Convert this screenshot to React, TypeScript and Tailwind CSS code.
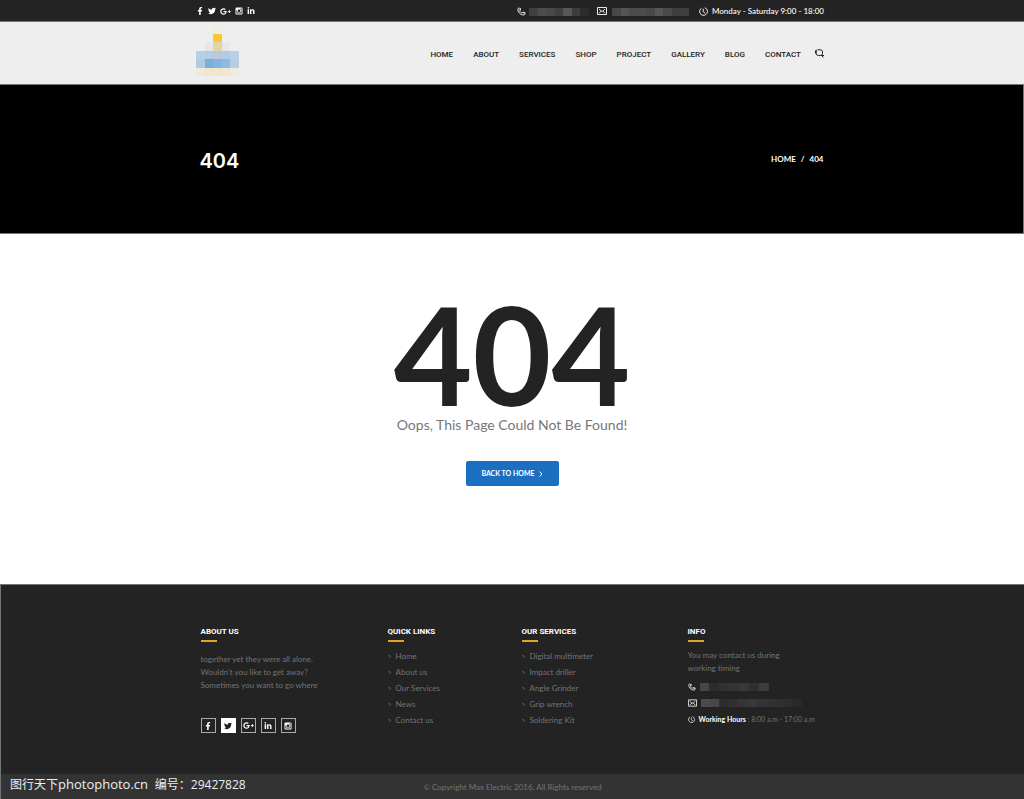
import type { ReactNode } from "react";
import { FaFacebookF, FaGooglePlusG, FaLinkedinIn, FaTwitter } from "react-icons/fa";

interface IconProps {
  className?: string;
}

const navItems = ["Home", "About", "Services", "Shop", "Project", "Gallery", "Blog", "Contact"];

const quickLinks = ["Home", "About us", "Our Services", "News", "Contact us"];

const services = ["Digital multimeter", "Impact driller", "Angle Grinder", "Grip wrench", "Soldering Kit"];

// x, y, fill of every tile of the logo
const logoTiles: [number, number, string][] = [
  [2, 0, "#f0ece2"],
  [2, 1, "#fcc62f"],
  [1, 2, "#e6e7e8"],
  [2, 2, "#e2d3a8"],
  [3, 2, "#e5e7e8"],
  [0, 3, "#b9cfe5"],
  [1, 3, "#b4cce4"],
  [2, 3, "#b9c9d6"],
  [3, 3, "#b1cbe4"],
  [4, 3, "#bbd0e5"],
  [0, 4, "#aecae5"],
  [1, 4, "#78aedd"],
  [2, 4, "#85b4dc"],
  [3, 4, "#90badf"],
  [4, 4, "#b5cee5"],
  [0, 5, "#f0e9dc"],
  [1, 5, "#f2e6cc"],
  [2, 5, "#f1e5cb"],
  [3, 5, "#f1e6cf"],
  [4, 5, "#efeadf"],
];

function InstagramIcon({ className }: IconProps) {
  return (
    <svg viewBox="0 0 16 16" className={className} fill="currentColor" aria-hidden="true">
      <path
        fillRule="evenodd"
        d="M3 1h10a2 2 0 0 1 2 2v10a2 2 0 0 1-2 2H3a2 2 0 0 1-2-2V3a2 2 0 0 1 2-2Zm8 2v2.5h2.5V3ZM2.8 7v6.2h10.4V7h-1.3a4 4 0 1 1-7.8 0ZM8 5.2a2.8 2.8 0 1 0 0 5.6 2.8 2.8 0 0 0 0-5.6Z"
      />
    </svg>
  );
}

function PhoneIcon({ className }: IconProps) {
  return (
    <svg viewBox="0 0 18 18" className={className} fill="none" stroke="currentColor" strokeWidth="1.8" aria-hidden="true">
      <path d="M2 3.5c.5-1.3 2-2 3.2-1.3C6.8 3.3 7.3 5.5 6 6.8c-.8.8-.6 1.6.8 3.2 1.5 1.7 2.6 2.3 3.5 1.4 1.2-1.2 3.6-1.2 5 .2 1.3 1.3.9 3.4-.9 4.1C8 17.6.3 9.5 2 3.5Z" />
      <path d="M11.5 11.5h5M6.5 2.5v4" />
    </svg>
  );
}

function MailIcon({ className }: IconProps) {
  return (
    <svg viewBox="0 0 20 16" className={className} fill="none" stroke="currentColor" strokeWidth="1.8" aria-hidden="true">
      <path d="M1 1h18v14H1Z" />
      <path d="M4 4l4.5 4h3L16 4M4 12.5l4.5-4.5M16 12.5L11.5 8" />
    </svg>
  );
}

function ClockIcon({ className }: IconProps) {
  return (
    <svg viewBox="0 0 18 18" className={className} fill="none" stroke="currentColor" strokeWidth="1.8" aria-hidden="true">
      <path d="M11.5 1.5A7.8 7.8 0 1 1 5 2.3" />
      <path d="M8.5 3.5v6l4 3" />
    </svg>
  );
}

function SearchIcon({ className }: IconProps) {
  return (
    <svg viewBox="0 0 18 18" className={className} fill="none" stroke="currentColor" strokeWidth="2" aria-hidden="true">
      <path d="M5 1.5h5.5a4.5 4.5 0 0 1 4.5 4.5v2.5a4.5 4.5 0 0 1-4.5 4.500H7A4.5 4.5 0 0 1 2.5 8.5V1.5" />
      <path d="M1 3v6M12 12l5 5M14 13h4" />
    </svg>
  );
}

function Logo() {
  return (
    <svg viewBox="0 0 5 6" className="h-[51px] w-[43px]" preserveAspectRatio="none" shapeRendering="crispEdges" aria-hidden="true">
      {logoTiles.map(([x, y, fill]) => (
        <rect key={`${x}-${y}`} x={x} y={y} width="1" height="1" fill={fill} />
      ))}
    </svg>
  );
}

const socials = [
  { label: "Facebook", icon: <FaFacebookF className="size-2" /> },
  { label: "Twitter", icon: <FaTwitter className="size-2" /> },
  { label: "Google Plus", icon: <FaGooglePlusG className="size-[11px]" /> },
  { label: "Instagram", icon: <InstagramIcon className="size-2" /> },
  { label: "LinkedIn", icon: <FaLinkedinIn className="size-2" /> },
];

const footerSocials = [socials[0], socials[1], socials[2], socials[4], socials[3]];

// Hidden contact value, drawn as a row of tiles
function Masked({ tiles, className }: { tiles: string[]; className: string }) {
  return (
    <span className={`flex h-2 ${className}`} aria-hidden="true">
      {tiles.map((tile, index) => (
        <span key={index} className={`flex-1 ${tile}`} />
      ))}
    </span>
  );
}

function TopBar() {
  return (
    <div className="bg-[#232323] text-white">
      <div className="mx-auto flex h-[21px] max-w-[624px] items-center justify-between pt-px">
        <div className="-ml-1 flex items-center gap-1">
          {socials.map((item) => (
            <a key={item.label} href="#" aria-label={item.label}>
              {item.icon}
            </a>
          ))}
        </div>
        <div className="flex items-center text-[8px] leading-3 font-medium">
          <a href="#" aria-label="Phone" className="mr-2 flex items-center gap-[3px]">
            <PhoneIcon className="size-[9px]" />
            <Masked
              className="mt-[2px] w-[60px]"
              tiles={["bg-[#404040]", "bg-[#4c4c4c]", "bg-[#494949]", "bg-[#404040]", "bg-[#585858]", "bg-[#3d3d3d]", "bg-[#2c2c2c]"]}
            />
          </a>
          <a href="#" aria-label="Email" className="mr-[10px] flex items-center gap-[5px]">
            <MailIcon className="h-2 w-[10px]" />
            <Masked
              className="mt-[2px] w-[77px]"
              tiles={["bg-[#484848]", "bg-[#555555]", "bg-[#4c4c4c]", "bg-[#4c4c4c]", "bg-[#484848]", "bg-[#555555]", "bg-[#494949]", "bg-[#3d3d3d]", "bg-[#404040]"]}
            />
          </a>
          <ClockIcon className="mr-1 size-[9px]" />
          <span>Monday - Saturday 9:00 - 18:00</span>
        </div>
      </div>
    </div>
  );
}

function Navbar() {
  return (
    <header className="border-y border-[#777777] bg-[#eeeeee]">
      <div className="mx-auto flex h-[62px] max-w-[624px] items-center justify-between">
        <a href="#" aria-label="Max Electric" className="-ml-1 self-start pt-[3px]">
          <Logo />
        </a>
        <nav className="flex items-center gap-5 pt-1 font-[Roboto,sans-serif] text-[8px] leading-3 font-medium text-[#232323] uppercase">
          {navItems.map((item) => (
            <a key={item} href="#">
              {item}
            </a>
          ))}
          <button aria-label="Search" className="-ml-[6px] pb-[3px]">
            <SearchIcon className="size-[9px]" />
          </button>
        </nav>
      </div>
    </header>
  );
}

function Banner() {
  return (
    <section className="border-r border-b border-[#777777] bg-black text-white">
      <div className="mx-auto flex h-[148px] max-w-[624px] items-center justify-between">
        <h1 className="pt-[3px] font-[Inter,sans-serif] text-[20px] leading-6 font-semibold">404</h1>
        <div className="flex gap-[5px] text-[8px] font-bold">
          <a href="#">HOME</a>
          <span>/</span>
          <span>404</span>
        </div>
      </div>
    </section>
  );
}

function NotFound() {
  return (
    <main className="flex h-[350px] flex-col items-center bg-white pt-[70px]">
      <p className="text-[136px] leading-[100px] font-bold text-[#232323]">404</p>
      <p className="mt-[9px] text-[14px] leading-6 text-[#777777]">Oops, This Page Could Not Be Found!</p>
      <button className="mt-6 flex h-[25px] w-[93px] items-center justify-center gap-1 rounded-[2px] bg-[#1b6fc0] text-[7px] font-bold text-white">
        BACK TO HOME
        <svg viewBox="0 0 4 6" className="h-[6px] w-1" fill="none" stroke="currentColor" aria-hidden="true">
          <path d="M.5.5 3 3 .5 5.5" />
        </svg>
      </button>
    </main>
  );
}

function FooterHeading({ children }: { children: ReactNode }) {
  return (
    <>
      <h2 className="font-[Roboto,sans-serif] text-[8px] leading-[10px] font-bold text-white uppercase">{children}</h2>
      <div className="mt-[3px] h-[2px] w-4 bg-[#dfa526]" />
    </>
  );
}

function LinkList({ items }: { items: string[] }) {
  return (
    <ul className="mt-[6px] text-[8px] leading-4">
      {items.map((item) => (
        <li key={item}>
          <a href="#" className="flex items-center gap-1">
            <span className="w-1 text-[7px]">&gt;</span>
            {item}
          </a>
        </li>
      ))}
    </ul>
  );
}

function Footer() {
  return (
    <footer className="relative border-t border-l border-[#6f7674] bg-[#232323] text-[#747474]">
      <div className="mx-auto grid h-[189px] max-w-[624px] grid-cols-[187fr_134fr_166fr_137fr] pt-[42px]">
        <div>
          <FooterHeading>About us</FooterHeading>
          <p className="mt-[11px] text-[8px] leading-[13px]">
            together yet they were all alone.
            <br />
            Wouldn't you like to get away?
            <br />
            Sometimes you want to go where
          </p>
          <div className="mt-[26px] flex gap-[5px]">
            {footerSocials.map((item) => (
              <a
                key={item.label}
                href="#"
                aria-label={item.label}
                className={`flex h-[15px] w-[15px] items-center justify-center border ${
                  item.label === "Twitter" ? "border-white bg-white text-[#232323]" : "border-[#aaaaaa] text-white"
                }`}
              >
                {item.icon}
              </a>
            ))}
          </div>
        </div>
        <div>
          <FooterHeading>Quick links</FooterHeading>
          <LinkList items={quickLinks} />
        </div>
        <div>
          <FooterHeading>Our services</FooterHeading>
          <LinkList items={services} />
        </div>
        <div className="min-w-0">
          <FooterHeading>Info</FooterHeading>
          <p className="mt-[7px] text-[8px] leading-[13px]">
            You may contact us during
            <br />
            working timing
          </p>
          <div className="mt-2 flex flex-col gap-2 text-[7px] leading-[9px] text-white">
            <a href="#" aria-label="Phone" className="flex items-center gap-1">
              <PhoneIcon className="size-2" />
              <Masked
                className="w-[69px]"
                tiles={["bg-[#464646]", "bg-[#2b2b2b]", "bg-[#313131]", "bg-[#343434]", "bg-[#383838]", "bg-[#303030]", "bg-[#3d3d3d]"]}
              />
            </a>
            <a href="#" aria-label="Email" className="flex items-center gap-1">
              <MailIcon className="h-2 w-[9px]" />
              <Masked
                className="w-[102px]"
                tiles={["bg-[#4c4c4c]", "bg-[#484848]", "bg-[#2d2d2d]", "bg-[#303030]", "bg-[#353535]", "bg-[#383838]", "bg-[#343434]", "bg-[#323232]", "bg-[#303030]", "bg-[#2e2e2e]", "bg-[#292929]"]}
              />
            </a>
            <div className="flex items-center gap-1 whitespace-nowrap">
              <ClockIcon className="size-[7px]" />
              <span>
                <b>Working Hours</b> <span className="text-[#747474]">: 8:00 a.m - 17:00 a.m</span>
              </span>
            </div>
          </div>
        </div>
      </div>
      <div className="flex h-[25px] items-center justify-center gap-[2px] bg-[#333333] text-[8px]">
        <span>©</span>
        <span>Copyright Max Electric 2016. All Rights reserved</span>
      </div>
      <p className="absolute bottom-1 left-[9px] font-['Open_Sans','Noto_Sans_CJK_SC',sans-serif] text-[12px] leading-5 whitespace-pre text-[#eeeeee]">
        图行天下<span className="text-[13px]">photophoto.cn  </span>编号：29427828
      </p>
    </footer>
  );
}

export default function App() {
  return (
    <div className="font-[Lato,sans-serif]">
      <TopBar />
      <Navbar />
      <Banner />
      <NotFound />
      <Footer />
    </div>
  );
}
